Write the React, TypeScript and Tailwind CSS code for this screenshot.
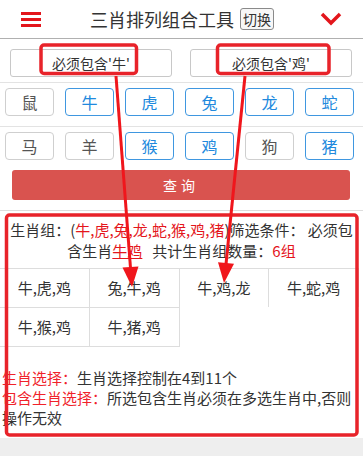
import React from "react";

const font = { fontFamily: '"Noto Sans CJK SC", "Noto Sans", sans-serif' };

const row1: [string, boolean][] = [
  ["鼠", false],
  ["牛", true],
  ["虎", true],
  ["兔", true],
  ["龙", true],
  ["蛇", true],
];
const row2: [string, boolean][] = [
  ["马", false],
  ["羊", false],
  ["猴", true],
  ["鸡", true],
  ["狗", false],
  ["猪", true],
];

function Zodiac({ items }: { items: [string, boolean][] }) {
  return (
    <div className="flex pl-[5px] gap-[11px]">
      {items.map(([n, sel]) => (
        <div
          key={n}
          className={
            sel
              ? "w-[49px] h-[28px] flex items-center justify-center rounded-[4px] border border-[#3f97e0] text-[#2189dd] text-[16px]"
              : "w-[49px] h-[28px] flex items-center justify-center rounded-[4px] border border-[#cfcfcf] text-[#555] text-[16px]"
          }
        >
          {n}
        </div>
      ))}
    </div>
  );
}

const results = ["牛,虎,鸡", "兔,牛,鸡", "牛,鸡,龙", "牛,蛇,鸡", "牛,猴,鸡", "牛,猪,鸡"];

export default function App() {
  return (
    <div className="relative w-[363px] h-[456px] bg-[#eeeeee] overflow-hidden text-[#333]" style={font}>
      <div className="bg-white">
        {/* header */}
        <div className="h-[39px] flex items-center border-b border-[#b0b0b0]">
          <div className="ml-[21px] w-[20px] flex flex-col gap-[3px]">
            <div className="h-[3px] bg-[#e3161c]" />
            <div className="h-[3px] bg-[#e3161c]" />
            <div className="h-[3px] bg-[#e3161c]" />
          </div>
          <div className="ml-[49px] text-[18px] leading-none text-[#333] whitespace-nowrap">三肖排列组合工具</div>
          <div className="ml-[6px] h-[22px] px-[2px] flex items-center border border-[#8a8a8a] rounded-[3px] text-[14px] leading-none bg-[#f7f7f7]">
            切换
          </div>
          <svg className="ml-auto mr-[21px]" width="22" height="14" viewBox="0 0 22 14">
            <path d="M2 2 L11 11 L20 2" fill="none" stroke="#e3161c" strokeWidth="3.5" />
          </svg>
        </div>

        {/* must include */}
        <div className="flex pl-[10px] pr-[11px] gap-[18px] pt-[10px] pb-[5px]">
          <div className="flex-1 h-[28px] flex items-center justify-center border border-[#c8c8c8] rounded-[3px] text-[14px] text-[#333]">
            必须包含'牛'
          </div>
          <div className="flex-1 h-[28px] flex items-center justify-center border border-[#c8c8c8] rounded-[3px] text-[14px] text-[#333]">
            必须包含'鸡'
          </div>
        </div>

        <div className="border-t border-[#e3e3e3] pt-[5px] pb-[10px]">
          <Zodiac items={row1} />
        </div>
        <div className="border-t border-[#e3e3e3] pt-[5px] pb-[10px]">
          <Zodiac items={row2} />
        </div>

        <div className="px-[12px] pr-[13px] pb-[10px]">
          <div className="h-[30px] rounded-[3px] bg-[#d9534f] text-white text-[14px] flex items-center justify-center tracking-[4px]">
            查询
          </div>
        </div>

        {/* results */}
        <div className="border-t border-[#dddddd]">
          <div className="pt-[8px] pb-[7px] text-center text-[15px] leading-[21px] whitespace-nowrap">
            <div>
              生肖组：(<span className="text-[#e4161c]">牛,虎,兔,龙,蛇,猴,鸡,猪</span>)筛选条件： 必须包
            </div>
            <div>
              含生肖<span className="text-[#e4161c] underline">牛鸡</span>
              <span className="ml-[10px]">共计生肖组数量：</span>
              <span className="text-[#e4161c]">6组</span>
            </div>
          </div>
          <div className="grid grid-cols-4 w-[359px] text-[15px]">
            {results.map((r) => (
              <div key={r} className="h-[39px] flex items-center justify-center border-t border-r border-[#dddddd]">
                {r}
              </div>
            ))}
          </div>
          <div className="w-[180px] border-t border-[#dddddd]" />
          <div className="pl-[2px] pt-[21px] pb-[10px] text-[15px] leading-[20px] whitespace-nowrap">
            <div>
              <span className="text-[#f0222a]">生肖选择：</span>生肖选择控制在4到11个
            </div>
            <div>
              <span className="text-[#f0222a]">包含生肖选择：</span>所选包含生肖必须在多选生肖中,否则
            </div>
            <div>操作无效</div>
          </div>
        </div>
      </div>

      {/* annotation overlay */}
      <svg className="absolute left-0 top-0 pointer-events-none" width="363" height="456" viewBox="0 0 363 456">
        <rect x="41" y="45" width="95.5" height="28.5" rx="3" fill="none" stroke="#e8232a" strokeWidth="3.5" />
        <rect x="217.5" y="45" width="111.5" height="28.5" rx="3" fill="none" stroke="#e8232a" strokeWidth="3.5" />
        <rect x="6.5" y="215" width="350.5" height="220" rx="3" fill="none" stroke="#e8232a" strokeWidth="3.5" />
        <line x1="116" y1="76" x2="130.5" y2="268" stroke="#f0161c" strokeWidth="3" />
        <polygon points="132,287 138.5,266.4 122.5,267.6" fill="#f0161c" />
        <line x1="245" y1="76" x2="226" y2="264" stroke="#f0161c" strokeWidth="3" />
        <polygon points="224,283 234,263.8 218,262.2" fill="#f0161c" />
      </svg>
    </div>
  );
}
